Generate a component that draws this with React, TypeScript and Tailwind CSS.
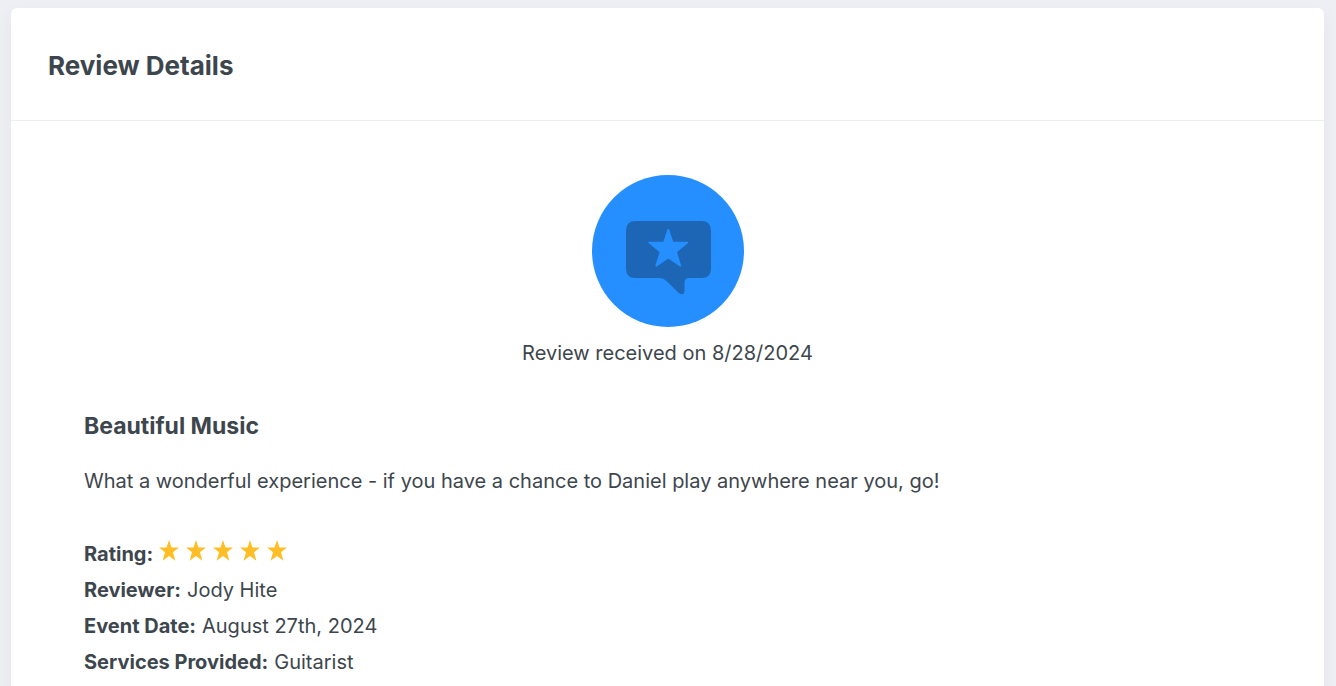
import React from "react";

function Star() {
  return (
    <svg viewBox="0 0 20 21" className="h-[21px] w-5" fill="#ffbe26" aria-hidden="true">
      <path d="M10 0 12.5 7.500H20L14 12.300 16.400 20.800 10 16 3.600 20.800 6 12.300 0 7.500H7.500Z" />
    </svg>
  );
}

function ReviewBadge() {
  return (
    <svg viewBox="0 0 152 152" className="size-[152px]" aria-hidden="true">
      <circle cx="76" cy="76" r="76" fill="#268fff" />
      <path
        d="M43.5 46H109.5Q119 46 119 55.500V93.500Q119 103 109.500 103H97Q92.500 103 92.500 107.500V116.500Q92.500 119 90 119.300Q88 119.300 86.500 117.800L74.500 106Q71.500 103 67.500 103H43.500Q34 103 34 93.500V55.500Q34 46 43.500 46Z"
        fill="#1c66b5"
      />
      <path
        d="M76.300 54.500 80.700 67.500H95.500L84.100 77 88.400 90.800 76.300 82.500 64.200 90.800 68.500 77 57.100 67.500H71.900Z"
        fill="#268fff"
        stroke="#268fff"
        strokeWidth="1.600"
        strokeLinejoin="round"
      />
    </svg>
  );
}

const details = [
  { label: "Reviewer:", value: "Jody Hite" },
  { label: "Event Date:", value: "August 27th, 2024" },
  { label: "Services Provided:", value: "Guitarist" },
];

export default function App() {
  return (
    <div className="h-screen overflow-hidden bg-[#eeeff4] pt-2 pr-3 pl-[11px] font-['Inter',sans-serif] text-[#3d464d]">
      <main className="min-h-screen rounded-t-md bg-white shadow-[0_6px_16px_rgba(40,60,80,0.05)]">
        <header className="border-b border-[#eceef0] px-[37px] pt-10 pb-9">
          <h1 className="text-[26px] leading-9 font-bold">Review Details</h1>
        </header>
        <div className="px-[73px] pt-[54px] text-xl leading-9">
          <div className="flex flex-col items-center gap-2">
            <ReviewBadge />
            <p>Review received on 8/28/2024</p>
          </div>
          <h2 className="mt-[37px] text-[23px] leading-9 font-bold">Beautiful Music</h2>
          <p className="mt-[19px]">
            What a wonderful experience - if you have a chance to Daniel play anywhere near you, go!
          </p>
          <dl className="mt-[37px]">
            <div className="flex items-center gap-1.5">
              <dt className="font-bold">Rating:</dt>
              <dd className="flex gap-[7px] pb-2" role="img" aria-label="5 out of 5 stars">
                <Star />
                <Star />
                <Star />
                <Star />
                <Star />
              </dd>
            </div>
            {details.map((item) => (
              <div key={item.label} className="flex gap-1.5">
                <dt className="font-bold">{item.label}</dt>
                <dd>{item.value}</dd>
              </div>
            ))}
          </dl>
        </div>
      </main>
    </div>
  );
}
